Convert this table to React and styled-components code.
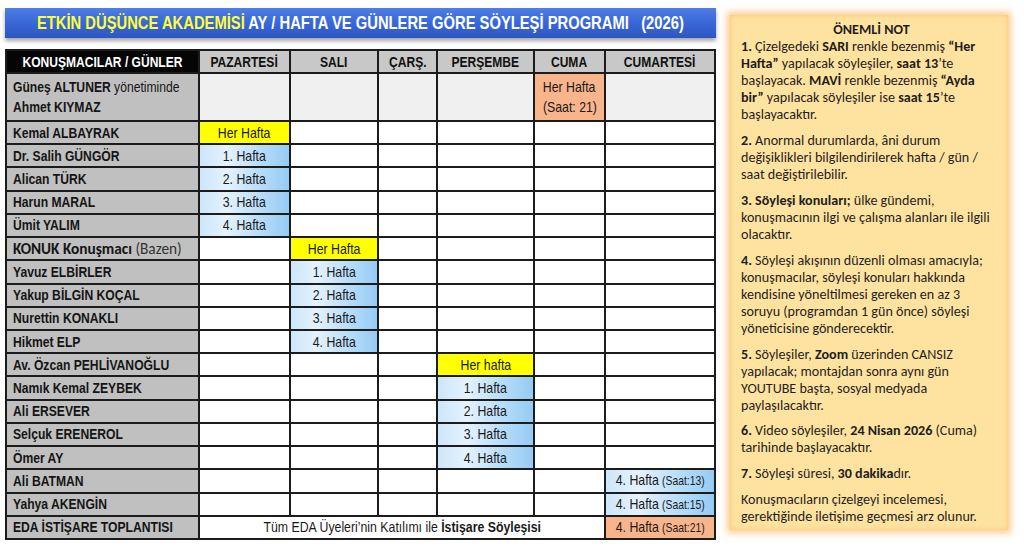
import React from "react";
import styled, { createGlobalStyle, css } from "styled-components";

const GlobalStyle = createGlobalStyle`
  html, body { margin: 0; padding: 0; background: #ffffff; }
  * { box-sizing: border-box; }
`;

const ARIAL = `"Liberation Sans", Arial, sans-serif`;
const CALIBRI = `Carlito, Calibri, Lato, "Open Sans", sans-serif`;

const Page = styled.div`
  display: flex;
  align-items: flex-start;
  padding: 8px 0 0 5px;
  width: 1024px;
  height: 546px;
  overflow: hidden;
`;

const LeftCol = styled.div`
  width: 711px;
  display: flex;
  flex-direction: column;
  gap: 11px;
`;

/* Arial Narrow is Arial condensed to ~82% width: emulate it */
const Narrow = styled.span`
  display: inline-block;
  white-space: pre;
  transform: scaleX(0.82);
  transform-origin: ${(p) => p.$origin || "center"};
`;

const TitleBar = styled.div`
  height: 30px;
  display: flex;
  align-items: center;
  justify-content: center;
  background: linear-gradient(180deg, #4e7ee6 0%, #3a69d9 45%, #2d56c4 100%);
  box-shadow: 0 3px 4px rgba(0, 0, 0, 0.35);
  font-family: ${ARIAL};
  font-weight: 700;
  font-size: 18px;
  color: #ffffff;
`;

const Accent = styled.span`
  color: #ffff33;
`;

const Grid = styled.div`
  display: grid;
  grid-template-columns: 191px 89px 86px 57px 95px 69px 108px;
  grid-template-rows: 21px 46px repeat(18, 1fr);
  gap: 2px;
  padding: 2px;
  height: 491px;
  background: #1c1c1c;
`;

const HeadCell = styled.div`
  display: flex;
  align-items: center;
  justify-content: center;
  font-family: ${ARIAL};
  font-weight: 700;
  font-size: 14.7px;
  color: ${(p) => (p.$dark ? "#ffffff" : "#111111")};
  background: ${(p) => (p.$dark ? "#050505" : "#c8c8c8")};
`;

const NameBox = styled.div`
  display: flex;
  flex-direction: column;
  justify-content: center;
  align-items: flex-start;
  padding: 0 6px;
  background: #c0c0c0;
  font-family: ${ARIAL};
  font-weight: 700;
  font-size: 14.8px;
  line-height: 20px;
  color: #151515;
  white-space: nowrap;
`;

function NameCell({ lines }) {
  return (
    <NameBox>
      {lines.map((l, i) => (
        <Narrow key={i} $origin="left">
          {l}
        </Narrow>
      ))}
    </NameBox>
  );
}

const Light = styled.span`
  font-weight: 400;
`;

const Guest = styled.span`
  font-family: ${CALIBRI};
  font-size: 15.3px;
  font-weight: 700;
  line-height: 20px;
`;

const GuestSoft = styled.span`
  font-weight: 400;
  color: #333;
`;

const tones = {
  plain: css`background: #ffffff;`,
  light: css`background: #f0f0f0;`,
  yellow: css`background: #ffff00;`,
  orange: css`background: #f8b48a;`,
  blue: css`background: linear-gradient(90deg, #cde6fa 0%, #e4f2fd 30%, #b3daf8 72%, #95cbf4 100%);`,
};

const CellBox = styled.div`
  display: flex;
  flex-direction: column;
  align-items: center;
  justify-content: center;
  font-family: ${ARIAL};
  font-size: 15px;
  line-height: 20px;
  color: #1a1a1a;
  white-space: nowrap;
  grid-column: ${(p) => (p.$span ? `span ${p.$span}` : "auto")};
  ${(p) => tones[p.$tone || "plain"]}
`;

function Cell({ tone, span, lines = [] }) {
  return (
    <CellBox $tone={tone} $span={span}>
      {lines.map((l, i) => (
        <Narrow key={i}>{l}</Narrow>
      ))}
    </CellBox>
  );
}

const Small = styled.span`
  font-size: 12.6px;
  margin-left: 4px;
`;

const Strong = styled.b`
  font-weight: 700;
`;

const NotePanel = styled.div`
  margin: 7px 0 0 14px;
  width: 278px;
  height: 515px;
  padding: 6px 6px 0 11px;
  background: #fee3a0;
  box-shadow: 0 0 7px 3px rgba(251, 168, 64, 0.6), inset 0 0 5px rgba(245, 160, 60, 0.45);
  font-family: ${CALIBRI};
  font-size: 14.1px;
  line-height: 17px;
  color: #1e1e1e;
`;

const NoteTitle = styled.div`
  text-align: center;
  font-weight: 700;
`;

const Para = styled.p`
  margin: 0 0 8.9px 0;
  white-space: nowrap;
`;

const days = ["PAZARTESİ", "SALI", "ÇARŞ.", "PERŞEMBE", "CUMA", "CUMARTESİ"];

const saat = (h) => (
  <>
    4. Hafta<Small>(Saat:{h})</Small>
  </>
);

const rows = [
  { name: "Kemal ALBAYRAK", col: 0, tone: "yellow", text: "Her Hafta" },
  { name: "Dr. Salih GÜNGÖR", col: 0, tone: "blue", text: "1. Hafta" },
  { name: "Alican TÜRK", col: 0, tone: "blue", text: "2. Hafta" },
  { name: "Harun MARAL", col: 0, tone: "blue", text: "3. Hafta" },
  { name: "Ümit YALIM", col: 0, tone: "blue", text: "4. Hafta" },
  { guest: true, col: 1, tone: "yellow", text: "Her Hafta" },
  { name: "Yavuz ELBİRLER", col: 1, tone: "blue", text: "1. Hafta" },
  { name: "Yakup BİLGİN KOÇAL", col: 1, tone: "blue", text: "2. Hafta" },
  { name: "Nurettin KONAKLI", col: 1, tone: "blue", text: "3. Hafta" },
  { name: "Hikmet ELP", col: 1, tone: "blue", text: "4. Hafta" },
  { name: "Av. Özcan PEHLİVANOĞLU", col: 3, tone: "yellow", text: "Her hafta" },
  { name: "Namık Kemal ZEYBEK", col: 3, tone: "blue", text: "1. Hafta" },
  { name: "Ali ERSEVER", col: 3, tone: "blue", text: "2. Hafta" },
  { name: "Selçuk ERENEROL", col: 3, tone: "blue", text: "3. Hafta" },
  { name: "Ömer AY", col: 3, tone: "blue", text: "4. Hafta" },
  { name: "Ali BATMAN", col: 5, tone: "blue", text: saat(13) },
  { name: "Yahya AKENGİN", col: 5, tone: "blue", text: saat(15) },
];

function ScheduleRow({ row }) {
  return (
    <>
      {row.guest ? (
        <NameBox>
          <Guest>
            KONUK Konuşmacı <GuestSoft>(Bazen)</GuestSoft>
          </Guest>
        </NameBox>
      ) : (
        <NameCell lines={[row.name]} />
      )}
      {days.map((d, i) =>
        i === row.col ? (
          <Cell key={d} tone={row.tone} lines={[row.text]} />
        ) : (
          <Cell key={d} />
        )
      )}
    </>
  );
}

export default function App() {
  return (
    <>
      <GlobalStyle />
      <Page>
        <LeftCol>
          <TitleBar>
            <Narrow>
              <Accent>ETKİN DÜŞÜNCE AKADEMİSİ</Accent>
              {" AY / HAFTA VE GÜNLERE GÖRE SÖYLEŞİ PROGRAMI   (2026)"}
            </Narrow>
          </TitleBar>
          <Grid>
            <HeadCell $dark>
              <Narrow>KONUŞMACILAR / GÜNLER</Narrow>
            </HeadCell>
            {days.map((d) => (
              <HeadCell key={d}>
                <Narrow>{d}</Narrow>
              </HeadCell>
            ))}

            <NameCell
              lines={[
                <>
                  Güneş ALTUNER <Light>yönetiminde</Light>
                </>,
                "Ahmet KIYMAZ",
              ]}
            />
            {days.map((d, i) =>
              i === 4 ? (
                <Cell key={d} tone="orange" lines={["Her Hafta", "(Saat: 21)"]} />
              ) : (
                <Cell key={d} tone="light" />
              )
            )}

            {rows.map((r, idx) => (
              <ScheduleRow key={idx} row={r} />
            ))}

            <NameCell lines={["EDA İSTİŞARE TOPLANTISI"]} />
            <Cell
              span={5}
              lines={[
                <>
                  Tüm EDA Üyeleri’nin Katılımı ile <Strong>İstişare Söyleşisi</Strong>
                </>,
              ]}
            />
            <Cell tone="orange" lines={[saat(21)]} />
          </Grid>
        </LeftCol>

        <NotePanel>
          <NoteTitle>ÖNEMLİ NOT</NoteTitle>
          <Para>
            <Strong>1.</Strong> Çizelgedeki <Strong>SARI</Strong> renkle bezenmiş <Strong>“Her</Strong>
            <br />
            <Strong>Hafta”</Strong> yapılacak söyleşiler, <Strong>saat 13</Strong>’te
            <br />
            başlayacak. <Strong>MAVİ</Strong> renkle bezenmiş <Strong>“Ayda</Strong>
            <br />
            <Strong>bir”</Strong> yapılacak söyleşiler ise <Strong>saat 15</Strong>’te
            <br />
            başlayacaktır.
          </Para>
          <Para>
            <Strong>2.</Strong> Anormal durumlarda, âni durum
            <br />
            değişiklikleri bilgilendirilerek hafta / gün /
            <br />
            saat değiştirilebilir.
          </Para>
          <Para>
            <Strong>3. Söyleşi konuları;</Strong> ülke gündemi,
            <br />
            konuşmacının ilgi ve çalışma alanları ile ilgili
            <br />
            olacaktır.
          </Para>
          <Para>
            <Strong>4.</Strong> Söyleşi akışının düzenli olması amacıyla;
            <br />
            konuşmacılar, söyleşi konuları hakkında
            <br />
            kendisine yöneltilmesi gereken en az 3
            <br />
            soruyu (programdan 1 gün önce) söyleşi
            <br />
            yöneticisine gönderecektir.
          </Para>
          <Para>
            <Strong>5.</Strong> Söyleşiler, <Strong>Zoom</Strong> üzerinden CANSIZ
            <br />
            yapılacak; montajdan sonra aynı gün
            <br />
            YOUTUBE başta, sosyal medyada
            <br />
            paylaşılacaktır.
          </Para>
          <Para>
            <Strong>6.</Strong> Video söyleşiler, <Strong>24 Nisan 2026</Strong> (Cuma)
            <br />
            tarihinde başlayacaktır.
          </Para>
          <Para>
            <Strong>7.</Strong> Söyleşi süresi, <Strong>30 dakika</Strong>dır.
          </Para>
          <Para>
            Konuşmacıların çizelgeyi incelemesi,
            <br />
            gerektiğinde iletişime geçmesi arz  olunur.
          </Para>
        </NotePanel>
      </Page>
    </>
  );
}
